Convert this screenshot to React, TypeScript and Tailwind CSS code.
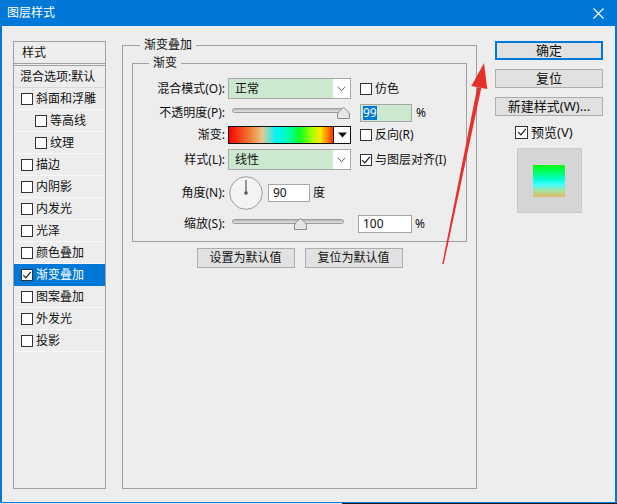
import React from "react";

function Check({ checked = false, size = "w-[12px] h-[12px]" }: { checked?: boolean; size?: string }) {
  return (
    <span className={`inline-flex ${size} shrink-0 items-center justify-center border border-[#333333] bg-white`}>
      {checked && (
        <svg width="10" height="10" viewBox="0 0 10 10">
          <path d="M1.3 5.2 L3.9 7.8 L8.8 1.9" fill="none" stroke="#1a1a1a" strokeWidth="1.2" />
        </svg>
      )}
    </span>
  );
}

function ListRow({ label, checked = false, indent = false, selected = false }: { label: string; checked?: boolean; indent?: boolean; selected?: boolean }) {
  return (
    <div
      className={`flex h-[22px] items-center gap-[3px] border-b text-[12px] leading-[16px] ${
        selected ? "border-[#0078d7] bg-[#0078d7] text-white" : "border-[#f9f9f9] text-[#111]"
      } ${indent ? "pl-[21px]" : "pl-[7px]"}`}
    >
      <Check checked={checked} />
      <span>{label}</span>
    </div>
  );
}

function Chevron() {
  return (
    <svg width="9" height="6" viewBox="0 0 9 6">
      <path d="M0.8 1 L4.5 4.6 L8.2 1" fill="none" stroke="#555" strokeWidth="1" />
    </svg>
  );
}

function Select({ value }: { value: string }) {
  return (
    <div className="ml-[3px] flex h-[21px] w-[123px] border border-[#a9a9a9] bg-white">
      <div className="flex flex-1 items-center bg-[#cce8cf] pl-[6px] text-[12px]">{value}</div>
      <div className="flex w-[17px] items-center justify-center">
        <Chevron />
      </div>
    </div>
  );
}

function Thumb() {
  return (
    <svg width="13" height="12" viewBox="0 0 13 12">
      <path d="M0.5 11.5 L0.5 7 Q1.5 4.5 4 2.5 L6.5 0.5 L9 2.5 Q11.5 4.5 12.5 7 L12.5 11.5 Z" fill="#e6e6e6" stroke="#8c8c8c" />
    </svg>
  );
}

function Label({ text }: { text: string }) {
  return <span className="w-[92px] shrink-0 text-right text-[12px] leading-[16px]">{text}</span>;
}

export default function App() {
  return (
    <div className="relative h-[504px] w-[617px] overflow-hidden bg-[#e8e8e8] font-['Noto_Sans','Noto_Sans_CJK_SC',sans-serif] text-[#111]">
      <div className="flex h-[503px] flex-col bg-[#0078d7]">
        {/* title bar */}
        <div className="flex h-[26px] shrink-0 items-center justify-between pl-[7px] pr-[13px] text-white">
          <span className="text-[12px] leading-[16px]">图层样式</span>
          <svg width="11" height="11" viewBox="0 0 11 11">
            <path d="M0.5 0.5 L10.5 10.5 M10.5 0.5 L0.5 10.5" stroke="#ffffff" strokeWidth="1.1" />
          </svg>
        </div>

        {/* body */}
        <div className="mx-[2px] mb-[1px] flex flex-1 items-start bg-[#ededed] pl-[11px] pt-[15px]">
          {/* left list */}
          <div className="flex h-[448px] w-[93px] shrink-0 flex-col border border-[#a0a0a0]">
            <div className="flex h-[24px] items-center border-b-[3px] border-double border-[#a0a0a0] pl-[8px] text-[12px] leading-[16px]">
              样式
            </div>
            <div className="flex h-[22px] items-center whitespace-nowrap border-b border-[#d8d8d8] pl-[6px] text-[12px] leading-[16px]">
              混合选项:默认
            </div>
            <ListRow label="斜面和浮雕" />
            <ListRow label="等高线" indent />
            <ListRow label="纹理" indent />
            <ListRow label="描边" />
            <ListRow label="内阴影" />
            <ListRow label="内发光" />
            <ListRow label="光泽" />
            <ListRow label="颜色叠加" />
            <ListRow label="渐变叠加" checked selected />
            <ListRow label="图案叠加" />
            <ListRow label="外发光" />
            <ListRow label="投影" />
          </div>

          {/* main group */}
          <fieldset className="-mt-[4px] ml-[16px] h-[452px] w-[355px] shrink-0 border border-[#a0a0a0] px-[9px]">
            <legend className="ml-[8px] px-[4px] text-[12px] leading-[16px]">渐变叠加</legend>
            <fieldset className="mt-[2px] h-[187px] border border-[#a0a0a0]">
              <legend className="ml-[16px] px-[4px] text-[12px] leading-[16px]">渐变</legend>

              {/* row 1 */}
              <div className="mt-[7px] flex h-[21px] items-center">
                <Label text="混合模式(O):" />
                <Select value="正常" />
                <div className="ml-[9px] flex items-center gap-[3px] text-[12px] leading-[16px]">
                  <Check />
                  <span>仿色</span>
                </div>
              </div>

              {/* row 2 */}
              <div className="mt-[5px] flex h-[18px] items-center">
                <Label text="不透明度(P):" />
                <div className="relative ml-[7px] h-[18px] w-[118px]">
                  <div className="absolute left-0 top-[4px] h-[5px] w-[113px] rounded-full border border-[#9c9c9c] bg-[linear-gradient(#b9b9b9,#e2e2e2)]" />
                  <div className="absolute left-[105px] top-[3px] flex">
                    <Thumb />
                  </div>
                </div>
                <div className="ml-[10px] flex h-[18px] w-[52px] items-center border border-[#a6a6a6] bg-[#cce8cf] pl-[2px]">
                  <span className="bg-[#0078d7] text-[12px] leading-[14px] text-white">99</span>
                </div>
                <span className="ml-[4px] text-[12px] leading-[16px]">%</span>
              </div>

              {/* row 3 */}
              <div className="mt-[4px] flex h-[18px] items-center">
                <Label text="渐变:" />
                <div className="ml-[3px] flex h-[18px] w-[123px] border border-[#111]">
                  <div className="flex-1 bg-[linear-gradient(to_right,#ff0000_0%,#f4401c_10%,#ee8a3c_22%,#e6c890_32%,#00f4ff_45%,#00ffb0_57%,#10ff20_68%,#a8ff00_80%,#ffe800_88%,#ff3000_100%)]" />
                  <div className="flex w-[17px] items-center justify-center border-l border-[#111] bg-white">
                    <svg width="9" height="6" viewBox="0 0 9 6">
                      <path d="M0 0.5 L9 0.5 L4.5 5.5 Z" fill="#111" />
                    </svg>
                  </div>
                </div>
                <div className="ml-[9px] flex items-center gap-[3px] text-[12px] leading-[16px]">
                  <Check />
                  <span>反向(R)</span>
                </div>
              </div>

              {/* row 4 */}
              <div className="mt-[5px] flex h-[21px] items-center">
                <Label text="样式(L):" />
                <Select value="线性" />
                <div className="ml-[9px] flex items-center gap-[3px] text-[12px] leading-[16px]">
                  <Check checked />
                  <span>与图层对齐(I)</span>
                </div>
              </div>

              {/* row 5 */}
              <div className="mt-[6px] flex h-[34px] items-center">
                <Label text="角度(N):" />
                <svg className="ml-[4px]" width="34" height="34" viewBox="0 0 34 34">
                  <circle cx="17" cy="17" r="16.3" fill="#f3f3f3" stroke="#9a9a9a" />
                  <line x1="17" y1="4" x2="17" y2="17" stroke="#555" strokeWidth="1.2" />
                  <circle cx="17" cy="17" r="1.8" fill="#555" />
                </svg>
                <div className="ml-[5px] flex h-[18px] w-[42px] items-center border border-[#a6a6a6] bg-white pl-[4px] text-[12px] leading-[14px]">
                  90
                </div>
                <span className="ml-[3px] text-[12px] leading-[16px]">度</span>
              </div>

              {/* row 6 */}
              <div className="mt-[5px] flex h-[18px] items-center">
                <Label text="缩放(S):" />
                <div className="relative ml-[7px] h-[18px] w-[118px]">
                  <div className="absolute left-0 top-[4px] h-[5px] w-[112px] rounded-full border border-[#9c9c9c] bg-[linear-gradient(#b9b9b9,#e2e2e2)]" />
                  <div className="absolute left-[62px] top-[3px] flex">
                    <Thumb />
                  </div>
                </div>
                <div className="ml-[8px] flex h-[18px] w-[54px] items-center border border-[#a6a6a6] bg-white pl-[4px] text-[12px] leading-[14px]">
                  100
                </div>
                <span className="ml-[3px] text-[12px] leading-[16px]">%</span>
              </div>
            </fieldset>

            <div className="mt-[6px] flex justify-center gap-[10px]">
              <button className="h-[20px] w-[98px] border border-[#adadad] bg-[#e1e1e1] text-[12px] leading-[16px]">设置为默认值</button>
              <button className="h-[20px] w-[98px] border border-[#adadad] bg-[#e1e1e1] text-[12px] leading-[16px]">复位为默认值</button>
            </div>
          </fieldset>

          {/* right column */}
          <div className="ml-[18px] flex w-[108px] shrink-0 flex-col">
            <button className="h-[19px] border-2 border-[#0078d7] bg-[#e1e1e1] text-[13px] leading-[15px]">确定</button>
            <button className="mt-[9px] h-[19px] border border-[#adadad] bg-[#e1e1e1] text-[13px] leading-[15px]">复位</button>
            <button className="mt-[9px] h-[19px] border border-[#adadad] bg-[#e1e1e1] text-[13px] leading-[15px]">新建样式(W)...</button>
            <div className="mt-[8px] flex items-center gap-[3px] pl-[20px] text-[13px] leading-[16px]">
              <Check checked size="w-[13px] h-[13px]" />
              <span>预览(V)</span>
            </div>
            <div className="mt-[8px] flex h-[65px] w-[65px] items-center justify-center self-center border border-[#c9c9c9] bg-[#d5d5d5]">
              <div className="h-[32px] w-[32px] bg-[linear-gradient(#00ff10_0%,#00ff60_22%,#00ffd0_45%,#40ffff_60%,#b0e0a0_82%,#e0b860_100%)]" />
            </div>
          </div>
        </div>
      </div>
      <div className="flex h-[1px]">
        <div className="w-[342px] bg-[#e4e4e4]" />
        <div className="flex-1 bg-[#1b1b1b]" />
      </div>

      {/* red arrow annotation */}
      <svg className="pointer-events-none absolute left-0 top-0" width="617" height="504" viewBox="0 0 617 504">
        <polygon points="442.3,263.9 443.7,264.1 481.3,87.9 477.3,87.1" fill="#e8302a" />
        <polygon points="484,63 487.2,89.1 471.4,85.9" fill="#e8302a" />
      </svg>
    </div>
  );
}
